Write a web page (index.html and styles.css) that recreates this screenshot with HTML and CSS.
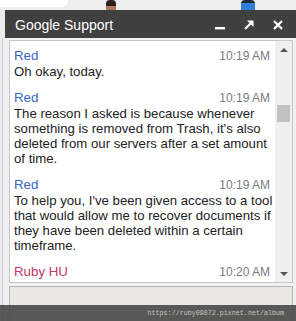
FILE: index.html
```html
<!DOCTYPE html>
<html lang="en">
    <head>
        <meta charset="UTF-8" />
        <meta name="viewport" content="width=device-width, initial-scale=1.0" />
        <title>Google Support</title>
        <link rel="stylesheet" href="styles.css">
    </head>
    <body>
        <div class="page">
            <div class="backdrop">
                <div class="backdrop-card"></div>
                <span class="person person-a"></span>
                <span class="person person-b"></span>
            </div>

            <div class="chat">
                <div class="titlebar">
                    <span class="title">Google Support</span>
                    <div class="controls">
                        <svg width="10" height="10" viewBox="0 0 10 10">
                            <rect x="0" y="7" width="10" height="2.4" fill="#fff"/>
                        </svg>
                        <svg width="10" height="10" viewBox="0 0 10 10">
                            <path d="M1 9 L6.5 3.5" stroke="#fff" stroke-width="2.2" fill="none"/>
                            <path d="M3 0.5 H9.5 V7 Z" fill="#fff"/>
                        </svg>
                        <svg width="10" height="10" viewBox="0 0 10 10">
                            <path d="M1 1 L9 9 M9 1 L1 9" stroke="#fff" stroke-width="2.2" fill="none"/>
                        </svg>
                    </div>
                </div>

                <div class="frame">
                    <div class="log">
                        <div class="messages">
                            <div class="msg">
                                <div class="msg-head">
                                    <span class="name">Red</span>
                                    <span class="time">10:19 AM</span>
                                </div>
                                <p>Oh okay, today.</p>
                            </div>
                            <div class="msg">
                                <div class="msg-head">
                                    <span class="name">Red</span>
                                    <span class="time">10:19 AM</span>
                                </div>
                                <p>The reason I asked is because whenever<br>something is removed from Trash, it's also<br>deleted from our servers after a set amount<br>of time.</p>
                            </div>
                            <div class="msg">
                                <div class="msg-head">
                                    <span class="name">Red</span>
                                    <span class="time">10:19 AM</span>
                                </div>
                                <p>To help you, I've been given access to a tool<br>that would allow me to recover documents if<br>they have been deleted within a certain<br>timeframe.</p>
                            </div>
                            <div class="msg">
                                <div class="msg-head">
                                    <span class="name me">Ruby HU</span>
                                    <span class="time">10:20 AM</span>
                                </div>
                            </div>
                        </div>
                        <div class="scrollbar">
                            <div class="scroll-btn"><span class="arrow-up"></span></div>
                            <div class="track"><div class="thumb"></div></div>
                            <div class="scroll-btn"><span class="arrow-down"></span></div>
                        </div>
                    </div>
                    <div class="compose"></div>
                </div>
            </div>

            <div class="watermark">https://ruby09872.pixnet.net/album</div>
        </div>
    </body>
</html>
```

FILE: styles.css
```css
:root {
  --header: #404040;
  --frame: #f1f1f1;
  --border: #c6c6c6;
  --blue: #3a66c4;
  --pink: #c2386a;
  --text: #222222;
  --muted: #7a7a7a;
  --font: 'Liberation Sans', Arial, sans-serif;
}

* {
  box-sizing: border-box;
  margin: 0;
  padding: 0;
}

body {
  font-family: var(--font);
  background: #ededed;
  width: 296px;
  height: 321px;
  overflow: hidden;
}

.page {
  position: relative;
  height: 321px;
}

/* strip of the page behind the chat window */
.backdrop {
  position: relative;
  height: 10px;
  background: #eeeeee;
}

.backdrop-card {
  width: 68px;
  height: 7px;
  background: #ffffff;
  border-bottom-right-radius: 6px;
}

.person {
  position: absolute;
  top: 0;
  width: 10px;
  height: 10px;
  border-radius: 4px 4px 0 0;
}

.person-a {
  left: 106px;
  background: linear-gradient(#2a211d 0 60%, #b07a62 60%);
}

.person-b {
  left: 241px;
  width: 14px;
  background: linear-gradient(#1f2a3a 0 30%, #2f7fd6 30%);
}

.chat {
  margin-left: 5px;
}

.titlebar {
  height: 28px;
  background: var(--header);
  color: #ffffff;
  display: flex;
  align-items: center;
  justify-content: space-between;
  padding: 0 13px 0 10px;
}

.title {
  font-size: 14px;
  padding-top: 1px;
}

.controls {
  display: flex;
  gap: 19px;
  padding-top: 1px;
}

.controls svg {
  display: block;
}

.frame {
  background: var(--frame);
  padding: 2px 3px 0 4px;
  box-shadow: -2px 0 0 var(--frame), -3px 0 0 #c8ccd8;
}

.log {
  display: flex;
  height: 243px;
  background: #ffffff;
  border: 1px solid var(--border);
}

.messages {
  flex: 1;
  padding: 7px 5px 0 4px;
  overflow: hidden;
  font-size: 13.2px;
  line-height: 15px;
  color: var(--text);
  white-space: nowrap;
}

.msg {
  margin-bottom: 11px;
}

.msg-head {
  display: flex;
  justify-content: space-between;
  align-items: baseline;
}

.name {
  color: var(--blue);
  font-size: 13.3px;
}

.name.me {
  color: var(--pink);
}

.time {
  color: var(--muted);
  font-size: 12px;
}

.scrollbar {
  width: 17px;
  background: #f0f0f0;
  display: flex;
  flex-direction: column;
}

.scroll-btn {
  height: 17px;
  display: flex;
  align-items: center;
  justify-content: center;
}

.arrow-up,
.arrow-down {
  width: 0;
  height: 0;
  border-left: 4px solid transparent;
  border-right: 4px solid transparent;
}

.arrow-up {
  border-bottom: 4px solid #555555;
}

.arrow-down {
  border-top: 4px solid #555555;
}

.track {
  flex: 1;
  padding: 47px 2px 0 2px;
}

.thumb {
  height: 17px;
  background: #c1c1c1;
}

.compose {
  margin-top: 3px;
  height: 40px;
  background: #e9e8e2;
  border: 1px solid #b4b4b4;
}

.watermark {
  position: absolute;
  left: 0;
  right: 0;
  bottom: 0;
  height: 16px;
  background: rgba(72, 72, 70, 0.9);
  color: #c4c4c4;
  font-family: 'Liberation Mono', monospace;
  font-size: 6.7px;
  line-height: 16px;
  text-align: right;
  padding-right: 12px;
}
```
